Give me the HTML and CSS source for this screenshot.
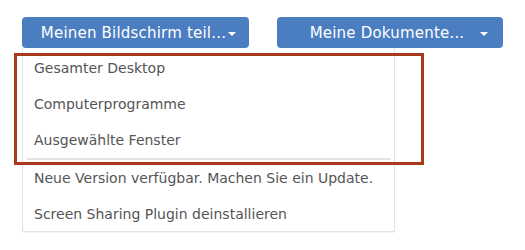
FILE: index.html
```html
<!DOCTYPE html>
<html lang="de">
<head>
    <meta charset="UTF-8">
    <title>Bildschirm teilen</title>
    <link rel="stylesheet" href="styles.css">
</head>
<body>
    <div class="toolbar">
        <div class="dropdown">
            <button class="btn btn-share">Meinen Bildschirm teil...<span class="caret"></span></button>
            <ul class="menu">
                <li>Gesamter Desktop</li>
                <li>Computerprogramme</li>
                <li>Ausgewählte Fenster</li>
                <li class="divider"></li>
                <li>Neue Version verfügbar. Machen Sie ein Update.</li>
                <li>Screen Sharing Plugin deinstallieren</li>
            </ul>
        </div>
        <div class="dropdown">
            <button class="btn btn-docs">Meine Dokumente...<span class="caret caret-wide"></span></button>
        </div>
    </div>

    <div class="highlight"></div>
</body>
</html>
```

FILE: styles.css
```css
* {
    margin: 0;
    padding: 0;
    box-sizing: border-box;
}

body {
    background: #fff;
    font-family: "DejaVu Sans", "Liberation Sans", sans-serif;
    width: 525px;
    height: 250px;
    overflow: hidden;
    position: relative;
}

.toolbar {
    display: flex;
    gap: 28px;
    padding: 17px 0 0 22px;
}

.dropdown {
    position: relative;
}

.btn {
    display: flex;
    align-items: center;
    justify-content: center;
    height: 31px;
    background-color: #4b7dc1;
    color: #fff;
    border: none;
    border-radius: 4px;
    font-family: inherit;
    font-size: 15px;
    letter-spacing: 0.2px;
    white-space: nowrap;
}

.btn-share {
    width: 227px;
    padding-left: 6px;
}

.btn-docs {
    width: 226px;
    padding-left: 18px;
}

.caret {
    display: inline-block;
    width: 0;
    height: 0;
    margin-left: 2px;
    margin-top: 3px;
    border-left: 4px solid transparent;
    border-right: 4px solid transparent;
    border-top: 4px solid #fff;
}

.caret-wide {
    margin-left: 16px;
}

/* menu aberto abaixo do botao */
.menu {
    position: absolute;
    top: 100%;
    left: 0;
    list-style: none;
    width: 373px;
    height: 184px;
    padding-top: 2px;
    border: 1px solid #e3e3e3;
    border-top: none;
    box-shadow: 0 1px 1px rgba(0, 0, 0, 0.04);
}

.menu li {
    height: 36px;
    display: flex;
    align-items: center;
    padding-left: 11px;
    font-size: 14px;
    color: #555;
    white-space: nowrap;
}

.menu li.divider {
    height: 2px;
    margin: 0 3px 0 4px;
    padding: 0;
    background: #e4e4e4;
}

/* rahmen um die drei auswahlpunkte */
.highlight {
    position: absolute;
    left: 14px;
    top: 53px;
    width: 410px;
    height: 112px;
    border: 3px solid #a8391c;
}
```
